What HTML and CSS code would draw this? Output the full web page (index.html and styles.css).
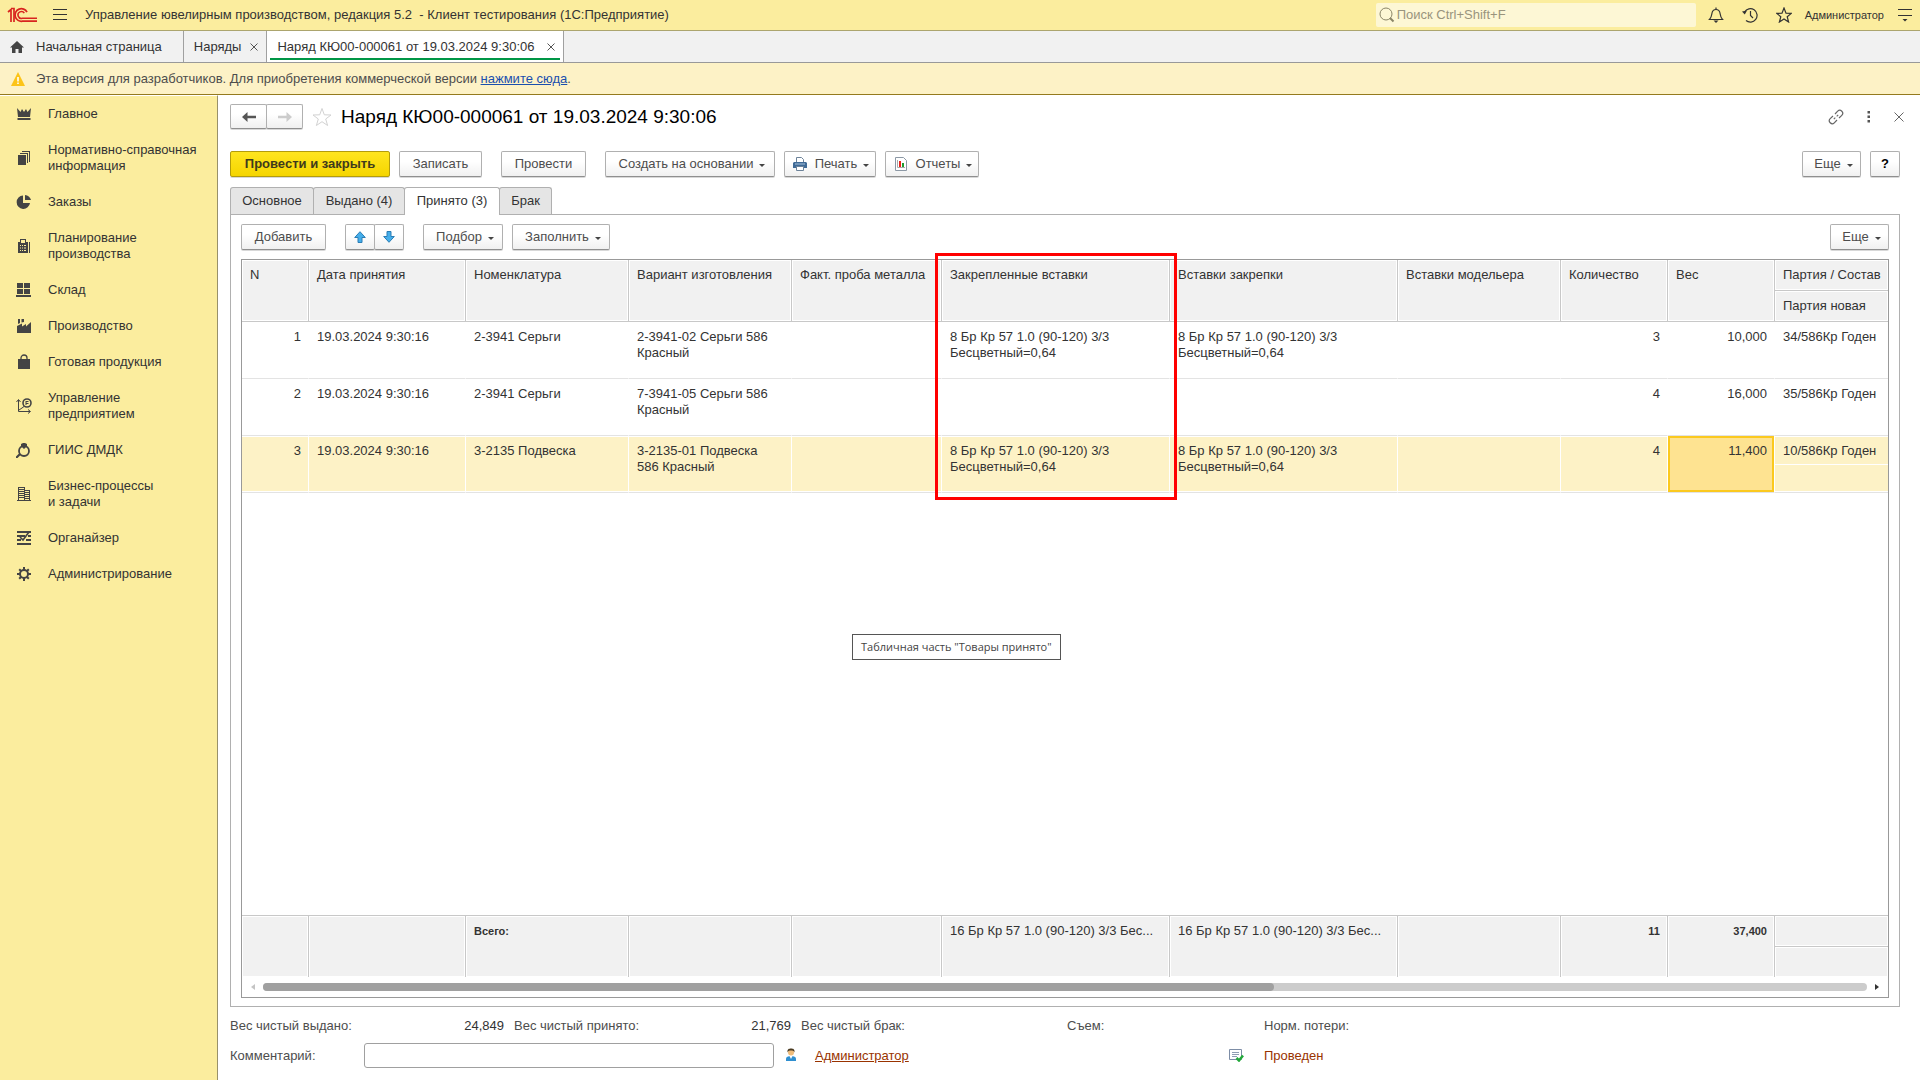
FILE: index.html
```html
<!DOCTYPE html>
<html lang="ru">
<head>
<meta charset="utf-8">
<meta name="viewport" content="width=device-width, initial-scale=1">
<title>Наряд КЮ00-000061 от 19.03.2024 9:30:06</title>
<link rel="stylesheet" href="styles.css">
</head>
<body>
<header class="topbar">
  <svg class="logo" width="30" height="16" viewBox="0 0 30 16" fill="none" stroke="#d8241f" stroke-width="2" aria-label="1С"><path d="M1 5 4 2.500V15M4 1.500H7V15" stroke-width="1.700"/><path d="M20 5.200A6.300 6.300 0 1 0 15.500 14.200H30" stroke-width="1.700"/><path d="M17.300 6.200A3.400 3.400 0 1 0 15.300 11.200H30" stroke-width="1.500"/></svg>
  <button class="icon-btn menu-btn" aria-label="Меню"><svg width="14" height="12" viewBox="0 0 14 12" stroke="#333"><path d="M0 .5H14M0 5.500H14M0 10.500H14"/></svg></button>
  <div class="app-title">Управление ювелирным производством, редакция 5.2 &nbsp;- Клиент тестирования (1С:Предприятие)</div>
  <label class="search">
    <svg width="16" height="16" viewBox="0 0 16 16" fill="none" stroke="#8a8567"><circle cx="7" cy="7" r="6"/><path d="m11 11 3.500 3.500" stroke-width="2"/></svg>
    <input type="text" placeholder="Поиск Ctrl+Shift+F" aria-label="Поиск">
  </label>
  <div class="top-tools">
    <button class="icon-btn" aria-label="Оповещения"><svg width="16" height="16" viewBox="0 0 16 16" fill="none" stroke="#333" stroke-width="1.200"><path d="M1.500 12.500H14.500C12.500 10.500 12.500 9 12 6 11.500 3.500 10 2.500 8 2.500S4.500 3.500 4 6C3.500 9 3.500 10.500 1.500 12.500Z"/><path d="M8 .5V2.500"/><path d="M5.500 13.500H10.500L8 16Z" fill="#333" stroke="none"/></svg></button>
    <button class="icon-btn" aria-label="История"><svg width="16" height="16" viewBox="0 0 16 16" fill="none" stroke="#333" stroke-width="1.200"><path d="M2.600 5A6.700 6.700 0 1 1 4 13.500"/><path d="M8.500 4V8.500L11 11"/><path d="M0 4.500 5 3.500 2.800 7.500Z" fill="#333" stroke="none"/></svg></button>
    <button class="icon-btn" aria-label="Избранное"><svg width="16" height="16" viewBox="0 0 16 16" fill="none" stroke="#333" stroke-width="1.200"><path d="M8 1 10 6.200 15.300 6.400 11.200 9.700 12.600 15 8 12 3.400 15 4.800 9.700.7 6.400 6 6.200Z"/></svg></button>
  </div>
  <a class="user" href="#">Администратор</a>
  <button class="icon-btn" aria-label="Настройки"><svg width="14" height="14" viewBox="0 0 14 14"><path d="M0 1.500H14M0 7.500H14" stroke="#333"/><path d="M4.500 11H9.500L7 13.500Z" fill="#333"/></svg></button>
</header>

<nav class="windows" aria-label="Открытые окна">
  <a class="window home" href="#"><svg width="14" height="12" viewBox="0 0 14 12" fill="#444"><path d="M7 0 0 6.500H2V12H5.500V8H8.500V12H12V6.500H14Z"/></svg>Начальная страница</a>
  <div class="window"><a href="#">Наряды</a><button class="close" aria-label="Закрыть"><svg width="8" height="8" viewBox="0 0 8 8" stroke="#555"><path d="m.5.5 7 7m0-7-7 7"/></svg></button></div>
  <div class="window active"><a href="#">Наряд КЮ00-000061 от 19.03.2024 9:30:06</a><button class="close" aria-label="Закрыть"><svg width="8" height="8" viewBox="0 0 8 8" stroke="#555"><path d="m.5.5 7 7m0-7-7 7"/></svg></button></div>
</nav>

<div class="notice">
  <svg width="14" height="14" viewBox="0 0 14 14"><path d="M7 0 14 14H0Z" fill="#fcc419"/><path d="M6.200 5H7.800V9.500H6.200ZM6.200 10.500H7.800V12H6.200Z" fill="#fff"/></svg>
  <span>Эта версия для разработчиков. Для приобретения коммерческой версии <a href="#">нажмите сюда</a>.</span>
</div>

<div class="workspace">
  <nav class="sections" aria-label="Разделы">
    <a href="#"><svg viewBox="0 0 16 16"><path d="M1 2 4.500 6 6 3 8 6 10 3 11.500 6 15 2 14 11H2ZM1.500 12H14.500V14H1.500Z"/></svg><span>Главное</span></a>
    <a href="#"><svg viewBox="0 0 16 16"><path d="M2 5H10V15H2ZM4 3H12V13H11V4H4ZM6 1H14V12H13V2H6Z"/></svg><span>Нормативно-справочная<br>информация</span></a>
    <a href="#"><svg viewBox="0 0 16 16"><path d="M7 1.500V9H14A6.700 6.700 0 1 1 7 1.500Z"/><path d="M9 1C12 1.500 14 3 15 6H9Z"/></svg><span>Заказы</span></a>
    <a href="#"><svg viewBox="0 0 16 16" fill-rule="evenodd"><path d="M4 1H10V4H12V15H2V4H4ZM5 2V5H9V2ZM4 7V8H5V7ZM6 7V8H7V7ZM8 7V8H10V7ZM4 9.500V10.500H5V9.500ZM6 9.500V10.500H7V9.500ZM8 9.500V10.500H10V9.500ZM4 12V13H5V12ZM6 12V13H7V12ZM8 12V13H10V12ZM13 4H14V15H13Z"/></svg><span>Планирование<br>производства</span></a>
    <a href="#"><svg viewBox="0 0 16 16"><path d="M1 1H7V6H1ZM8 1H14V6H8ZM1 7H7V12H1ZM8 7H14V12H8ZM0 13H15V15H0Z"/></svg><span>Склад</span></a>
    <a href="#"><svg viewBox="0 0 16 16"><path d="M1 15V8L6 5.500V8.500L10 6V8.500L15 4V15ZM2 1H4V5L2 6ZM5.500 1H8V4L5.500 4.500Z"/></svg><span>Производство</span></a>
    <a href="#"><svg viewBox="0 0 16 16"><path d="M2 5H14V15H2Z"/><path d="M5 8V4A3 3 0 0 1 11 4V8" fill="none" stroke="#444" stroke-width="1.300"/></svg><span>Готовая продукция</span></a>
    <a href="#"><svg viewBox="0 0 16 16" fill="none" stroke="#444"><path d="M2.500 2V13.500H14M.5 4 2.500 1.500 4.500 4M12 11.500 14.500 13.500 12 15.500M3 12 6 10 8 8.500" /><circle cx="11" cy="5" r="4" stroke-width="1.600"/><path d="M10 3V7M10 3.500H12.500M10 5.500H12.500"/></svg><span>Управление<br>предприятием</span></a>
    <a href="#"><svg viewBox="0 0 16 16"><circle cx="8" cy="9" r="5" fill="none" stroke="#444" stroke-width="1.800"/><path d="M5 2 7 1H9L11 2V4L8 7 5 4ZM0 14.500 3.500 11 5 12.500 1.500 16H0Z"/></svg><span>ГИИС ДМДК</span></a>
    <a href="#"><svg viewBox="0 0 16 16" fill="none" stroke="#444"><path d="M2.500 1V14.500M8.500 1V14.500M13.500 4V14.500M2 1.500H9M3 3.500H8M3 5.500H8M3 7.500H8M3 9.500H8M3 11.500H8M9 4.500H14M9 6.500H13M9 8.500H13M9 10.500H13M9 12.500H13M1 14.500H15"/></svg><span>Бизнес-процессы<br>и задачи</span></a>
    <a href="#"><svg viewBox="0 0 16 16"><path d="M1 1H15V3H1ZM1 5H9V7H1ZM12 5H15V7H12ZM1 9H5V11H1ZM10 9H15V11H10ZM1 13H15V15H1Z"/><path d="m4 7 3 3 6-8" fill="none" stroke="#444" stroke-width="1.600"/></svg><span>Органайзер</span></a>
    <a href="#"><svg viewBox="0 0 16 16" fill="none" stroke="#444"><circle cx="8" cy="8" r="4" stroke-width="2"/><path d="M8 1V4M8 12V15M1 8H4M12 8H15M3.200 3.200 5 5M11 11 12.800 12.800M12.800 3.200 11 5M5 11 3.200 12.800" stroke-width="2"/></svg><span>Администрирование</span></a>
  </nav>

  <main class="form">
    <div class="form-head">
      <div class="joined nav-pair">
        <button aria-label="Назад"><svg width="14" height="10" viewBox="0 0 14 10" fill="#555"><path d="M0 5 5.500 0V3.800H14V6.200H5.500V10Z"/></svg></button>
        <button aria-label="Вперед"><svg width="14" height="10" viewBox="0 0 14 10" fill="#ccc"><path d="M14 5 8.500 0V3.800H0V6.200H8.500V10Z"/></svg></button>
      </div>
      <button class="icon-btn" aria-label="В избранное"><svg width="20" height="20" viewBox="0 0 20 20" fill="none" stroke="#d2d2d2"><path d="M10 1.500 12.300 7.800 19 8 13.700 12 15.600 18.500 10 14.700 4.400 18.500 6.300 12 1 8 7.700 7.800Z"/></svg></button>
      <h1>Наряд КЮ00-000061 от 19.03.2024 9:30:06</h1>
      <div class="head-tools">
        <button class="icon-btn" aria-label="Ссылка"><svg width="16" height="16" viewBox="0 0 16 16" fill="none" stroke="#666" stroke-width="1.200"><path d="M7 5 9.700 2.200A2.800 2.800 0 0 1 13.800 6.300L11 9M9 11 6.300 13.800A2.800 2.800 0 0 1 2.200 9.700L5 7M5.800 10.200 7.300 8.700M8.700 7.300 10.200 5.800"/></svg></button>
        <button class="icon-btn" aria-label="Действия"><svg width="4" height="12" viewBox="0 0 4 12" fill="#555"><path d="M.5 0H3V2.500H.5ZM.5 4.500H3V7H.5ZM.5 9H3V11.500H.5Z"/></svg></button>
        <button class="icon-btn" aria-label="Закрыть"><svg width="10" height="10" viewBox="0 0 10 10" stroke="#666"><path d="m.5.5 9 9m0-9-9 9"/></svg></button>
      </div>
    </div>

    <div class="toolbar commands">
      <button class="btn primary w-160">Провести и закрыть</button>
      <button class="btn w-83">Записать</button>
      <button class="btn w-85 spaced">Провести</button>
      <button class="btn drop w-170 spaced">Создать на основании</button>
      <button class="btn drop w-92"><svg width="14" height="14" viewBox="0 0 14 14"><path d="M3.500 5V.5H8.500L10.500 2.500V5" fill="#fff" stroke="#6c8299"/><path d="M1 5H13L14 6V11H0V6Z" fill="#3f6a96"/><path d="M2 7H12" stroke="#a8c2dc"/><path d="M3.500 9.500H10.500V13.500H3.500Z" fill="#fff" stroke="#6c8299"/></svg>Печать</button>
      <button class="btn drop w-94"><svg width="14" height="14" viewBox="0 0 14 14"><path d="M1.500.5H9.500L12.500 3.500V13.500H1.500Z" fill="#fff" stroke="#8c98a5"/><path d="M3.500 3V10.500H11" fill="none" stroke="#aaa"/><path d="M5 4H7V10H5Z" fill="#e8211c"/><path d="M8 6H10V10H8Z" fill="#209b2c"/></svg>Отчеты</button>
      <button class="btn drop w-59 push">Еще</button>
      <button class="btn help">?</button>
    </div>

    <div class="tabs" role="tablist">
      <button role="tab" class="w-84">Основное</button>
      <button role="tab" class="w-92">Выдано (4)</button>
      <button role="tab" class="w-96" aria-selected="true">Принято (3)</button>
      <button role="tab" class="w-53">Брак</button>
    </div>

    <section class="panel">
      <div class="toolbar">
        <button class="btn w-85">Добавить</button>
        <div class="joined spaced">
          <button aria-label="Вверх"><svg width="12" height="12" viewBox="0 0 12 12" fill="#45aeea" stroke="#2a7db5"><path d="M6 .7 11.300 6.500H8V11.500H4V6.500H.7Z"/></svg></button>
          <button aria-label="Вниз"><svg width="12" height="12" viewBox="0 0 12 12" fill="#45aeea" stroke="#2a7db5"><path d="M6 11.300.7 5.500H4V.5H8V5.500H11.300Z"/></svg></button>
        </div>
        <button class="btn drop w-80 spaced">Подбор</button>
        <button class="btn drop w-98">Заполнить</button>
        <button class="btn drop w-59 push">Еще</button>
      </div>

      <div class="grid-box">
        <table class="grid">
          <colgroup><col class="c-n"><col class="c-date"><col class="c-item"><col class="c-item"><col class="c-probe"><col class="c-stones"><col class="c-stones"><col class="c-model"><col class="c-num"><col class="c-num"><col></colgroup>
          <thead>
            <tr><th rowspan="2">N</th><th rowspan="2">Дата принятия</th><th rowspan="2">Номенклатура</th><th rowspan="2">Вариант изготовления</th><th rowspan="2">Факт. проба металла</th><th rowspan="2">Закрепленные вставки</th><th rowspan="2">Вставки закрепки</th><th rowspan="2">Вставки модельера</th><th rowspan="2">Количество</th><th rowspan="2">Вес</th><th>Партия / Состав</th></tr>
            <tr><th>Партия новая</th></tr>
          </thead>
          <tbody>
            <tr><td class="num">1</td><td>19.03.2024 9:30:16</td><td>2-3941 Серьги</td><td>2-3941-02 Серьги 586 Красный</td><td></td><td>8 Бр Кр 57 1.0 (90-120) 3/3 Бесцветный=0,64</td><td>8 Бр Кр 57 1.0 (90-120) 3/3 Бесцветный=0,64</td><td></td><td class="num">3</td><td class="num">10,000</td><td>34/586Кр Годен</td></tr>
            <tr><td class="num">2</td><td>19.03.2024 9:30:16</td><td>2-3941 Серьги</td><td>7-3941-05 Серьги 586 Красный</td><td></td><td></td><td></td><td></td><td class="num">4</td><td class="num">16,000</td><td>35/586Кр Годен</td></tr>
            <tr class="selected"><td class="num">3</td><td>19.03.2024 9:30:16</td><td>3-2135 Подвеска</td><td>3-2135-01 Подвеска<br>586 Красный</td><td></td><td>8 Бр Кр 57 1.0 (90-120) 3/3 Бесцветный=0,64</td><td>8 Бр Кр 57 1.0 (90-120) 3/3 Бесцветный=0,64</td><td></td><td class="num">4</td><td class="num current">11,400</td><td class="split">10/586Кр Годен</td></tr>
            <tr class="filler"><td colspan="11"></td></tr>
          </tbody>
          <tfoot>
            <tr><td rowspan="2"></td><td rowspan="2"></td><td rowspan="2" class="total">Всего:</td><td rowspan="2"></td><td rowspan="2"></td><td rowspan="2">16 Бр Кр 57 1.0 (90-120) 3/3 Бес...</td><td rowspan="2">16 Бр Кр 57 1.0 (90-120) 3/3 Бес...</td><td rowspan="2"></td><td rowspan="2" class="num total">11</td><td rowspan="2" class="num total">37,400</td><td></td></tr>
            <tr><td></td></tr>
          </tfoot>
        </table>
        <div class="scroll">
          <svg width="4" height="6" viewBox="0 0 4 6" fill="#c4c4c4"><path d="M4 0V6L0 3Z"/></svg>
          <div class="track"><div class="thumb"></div></div>
          <svg width="4" height="6" viewBox="0 0 4 6" fill="#333"><path d="M0 0V6L4 3Z"/></svg>
        </div>
        <div class="marker"></div>
        <div class="tooltip" role="tooltip">Табличная часть "Товары принято"</div>
      </div>
    </section>

    <dl class="sums">
      <div><dt>Вес чистый выдано:</dt><dd>24,849</dd></div>
      <div><dt>Вес чистый принято:</dt><dd>21,769</dd></div>
      <div><dt>Вес чистый брак:</dt><dd></dd></div>
      <div><dt>Съем:</dt><dd></dd></div>
      <div><dt>Норм. потери:</dt><dd></dd></div>
    </dl>
    <div class="comment">
      <label for="comment">Комментарий:</label>
      <input id="comment" type="text">
      <div class="author">
        <svg width="12" height="14" viewBox="0 0 12 14"><path d="M1 13V10.500C1 9 3 8 6 8S11 9 11 10.500V13Z" fill="#2f8fd0"/><path d="M4.500 8 6 11 7.500 8Z" fill="#fff"/><circle cx="6" cy="4.500" r="3" fill="#f0bd7c"/><path d="M2.500 4.500C2 1 4 .5 6 .5S10 1 9.500 4.500C9 3 8 2.500 6 2.500S3 3 2.500 4.500Z" fill="#4a3a20"/></svg>
        <a href="#">Администратор</a>
      </div>
      <div class="status">
        <svg width="16" height="14" viewBox="0 0 16 14" fill="none"><path d="M1.500 1.500H13.500V11.500H1.500Z" fill="#fff" stroke="#7d8da6"/><path d="M4 4.500H11M4 6.500H11M4 8.500H9" stroke="#8f9db3"/><path d="m8.500 10 2.500 2.500 4-5" stroke="#22a83a" stroke-width="2.500"/></svg>
        <span>Проведен</span>
      </div>
    </div>
  </main>
</div>
</body>
</html>
```
FILE: styles.css
```css
* { box-sizing: border-box; }

body {
  margin: 0;
  min-height: 100vh;
  display: flex;
  flex-direction: column;
  background: #fff;
  color: #333;
  font: 13px/16px "Liberation Sans", Arial, sans-serif;
}

button, input {
  font: inherit;
  color: inherit;
}

svg { flex: none; display: block; }

.icon-btn, .close {
  display: flex;
  padding: 0;
  border: 0;
  background: none;
}

/* Title bar */
.topbar {
  display: flex;
  align-items: center;
  height: 31px;
  padding: 0 8px 0 7px;
  background: #fbed9e;
  border-bottom: 1px solid #aca56e;
}
.menu-btn { margin: 0 18px 0 16px; }
.app-title { flex: 1; }
.search {
  display: flex;
  align-items: center;
  gap: 2px;
  width: 320px;
  height: 24px;
  padding-left: 3px;
  border-radius: 2px;
  background: #fdf7d5;
}
.search input {
  flex: 1;
  border: 0;
  padding: 0;
  background: none;
  outline: 0;
}
.search input::placeholder { color: #99947d; opacity: 1; }
.top-tools {
  display: flex;
  gap: 18px;
  margin: 0 13px 0 12px;
}
.user {
  margin-right: 14px;
  font-size: 11px;
  color: inherit;
  text-decoration: none;
}

/* Open windows */
.windows {
  display: flex;
  height: 32px;
  background: #f1f1f1;
  border-bottom: 1px solid #999;
}
.window {
  display: flex;
  align-items: center;
  gap: 9px;
  padding: 0 8px 0 10px;
  border-right: 1px solid #a0a0a0;
}
.window, .window a { color: #333; text-decoration: none; }
.window.home { gap: 12px; padding-right: 21px; }
.window.active {
  gap: 13px;
  background: linear-gradient(#009646, #009646) center bottom 2px / calc(100% - 6px) 2px no-repeat #fff;
}

.notice {
  display: flex;
  align-items: center;
  gap: 11px;
  height: 32px;
  padding-left: 11px;
  background: #fdf2c6;
  border-bottom: 1px solid #947a1e;
  color: #4d4d4d;
}
.notice a { color: #1a4fae; }

.workspace { flex: 1; display: flex; }

/* Sections */
.sections {
  width: 218px;
  background: #fbed9e;
  border-right: 1px solid #98916a;
  border-top: 1px solid #fff;
}
.sections a {
  display: flex;
  align-items: center;
  gap: 16px;
  padding: 10px 0 10px 16px;
  color: #333;
  text-decoration: none;
}
.sections svg { width: 16px; height: 16px; fill: #444; }
.sections svg[fill="none"] { fill: none; }

/* Form */
.form {
  flex: 1;
  min-width: 0;
  display: flex;
  flex-direction: column;
  padding: 9px 20px 12px 12px;
}
.form-head {
  display: flex;
  align-items: center;
  gap: 9px;
  height: 25px;
  margin-right: -4px;
}
.form-head h1 {
  flex: 1;
  margin: 0;
  font-size: 19px;
  line-height: 24px;
  font-weight: 400;
  color: #000;
}
.head-tools {
  display: flex;
  align-items: center;
  gap: 23px;
}

.toolbar { display: flex; gap: 9px; }
.commands { margin-top: 22px; }
.spaced { margin-left: 10px; }
.push { margin-left: auto; }

.btn, .joined button {
  display: flex;
  align-items: center;
  justify-content: center;
  height: 26px;
  padding: 0;
  border: 1px solid #b0b0b0;
  border-bottom-color: #8f8f8f;
  border-radius: 2px;
  background: linear-gradient(#fff 40%, #f0f0f0);
  color: #4d4d4d;
  white-space: nowrap;
  box-shadow: 0 1px 0 #d8d8d8;
}
.btn.primary {
  border-color: #b39c0c;
  background: linear-gradient(#ffe51f, #f5d500);
  color: #3f3a1c;
  font-weight: 700;
}
.btn svg { margin: 0 8px 0 -2px; }
.drop::after {
  content: "";
  margin: 3px 0 0 6px;
  border: 3px solid transparent;
  border-top-color: #444;
  border-bottom: 0;
}
.btn.drop { padding-left: 4px; }
.btn.help { width: 30px; color: #000; font-weight: 700; }
.joined { display: flex; }
.joined button { width: 30px; }
.joined button + button { margin-left: -1px; }
.joined.nav-pair button { width: 37px; height: 25px; }

.w-53 { width: 53px; }
.w-59 { width: 59px; }
.w-80 { width: 80px; }
.w-83 { width: 83px; }
.w-84 { width: 84px; }
.w-85 { width: 85px; }
.w-92 { width: 92px; }
.w-94 { width: 94px; }
.w-96 { width: 96px; }
.w-98 { width: 98px; }
.w-160 { width: 160px; }
.w-170 { width: 170px; }

.tabs {
  display: flex;
  margin-top: 10px;
}
.tabs button {
  height: 27px;
  padding: 0;
  border: 1px solid #b0b0b0;
  border-bottom: 0;
  border-radius: 3px 3px 0 0;
  background: #e5e5e5;
}
.tabs button + button { margin-left: -1px; }
.tabs button[aria-selected="true"] {
  background: #fff;
  margin-bottom: -1px;
  height: 28px;
  padding-bottom: 1px;
  z-index: 1;
}

.panel {
  flex: 1;
  display: flex;
  flex-direction: column;
  gap: 9px;
  padding: 9px 10px 8px 10px;
  border: 1px solid #b0b0b0;
}

/* Table */
.grid-box {
  position: relative;
  flex: 1;
  display: flex;
  flex-direction: column;
  border: 1px solid #999;
}
.grid {
  flex: 1;
  width: 100%;
  table-layout: fixed;
  border-spacing: 0;
}
.c-n { width: 67px; }
.c-date { width: 157px; }
.c-item { width: 163px; }
.c-probe { width: 150px; }
.c-stones { width: 228px; }
.c-model { width: 163px; }
.c-num { width: 107px; }

.grid th, .grid td {
  padding: 7px 7px 0 8px;
  text-align: left;
  vertical-align: top;
  font-weight: 400;
}
.grid .num { text-align: right; }
.grid th, .grid tfoot td {
  height: 31px;
  background: #f1f1f1;
  border-right: 1px solid #c8c8c8;
  box-shadow: inset 0 0 0 1px #fff;
  white-space: nowrap;
}
.grid th { border-bottom: 1px solid #c8c8c8; }
.grid tfoot td { border-top: 1px solid #c8c8c8; }
.grid tr > :last-child:not([rowspan]) { border-right: 0; }
.grid tbody td {
  height: 57px;
  border-bottom: 1px solid #e3e3e3;
  border-right: 1px solid #fff;
}
.grid .selected td {
  background: #fdf2c6;
  box-shadow: inset 0 1px 0 #fff, inset 0 -1px 0 #fff;
}
.grid .selected .current {
  background: #fee391;
  box-shadow: inset 0 0 0 2px #fbc91f;
}
.grid .selected .split {
  background: linear-gradient(#fff, #fff) 0 28px / 100% 1px no-repeat #fdf2c6;
}
.grid .filler td { height: auto; border: 0; }
.grid .total { font-size: 11px; font-weight: 700; }

.scroll {
  display: flex;
  align-items: center;
  gap: 8px;
  height: 20px;
  padding: 0 9px;
}
.track {
  flex: 1;
  height: 8px;
  border-radius: 4px;
  background: #ccc;
}
.thumb {
  width: 63%;
  height: 8px;
  border-radius: 4px;
  background: #a0a0a0;
}

.marker {
  position: absolute;
  left: 693px;
  top: -7px;
  width: 242px;
  height: 247px;
  border: 3px solid #f00;
}
.tooltip {
  position: absolute;
  left: 610px;
  top: 374px;
  padding: 4px 8px;
  border: 1px solid #555;
  background: #fff;
  font: 11px/16px "Open Sans", "Noto Sans", sans-serif;
  color: #444;
  white-space: nowrap;
}

/* Form footer */
.sums {
  display: grid;
  grid-template-columns: 274px 277px 256px 187px auto;
  gap: 10px;
  margin: 11px 0 0;
  color: #4d4d4d;
}
.sums div { display: flex; justify-content: space-between; }
.sums dd { margin: 0; color: #333; }
.comment {
  display: flex;
  align-items: center;
  margin-top: 9px;
  color: #4d4d4d;
}
.comment label { width: 134px; }
.comment input {
  width: 410px;
  height: 25px;
  border: 1px solid #a0a0a0;
  border-radius: 3px;
}
.author {
  display: flex;
  gap: 18px;
  width: 444px;
  padding-left: 11px;
}
.author a, .status { color: #993300; }
.status { display: flex; gap: 20px; padding-left: 10px; }
```
